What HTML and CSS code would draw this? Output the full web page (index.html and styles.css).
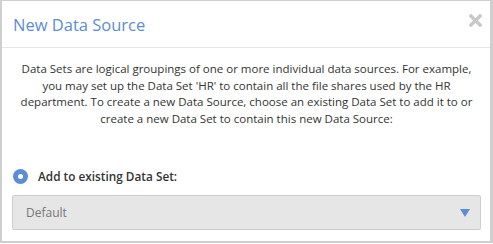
FILE: index.html
```html
<!DOCTYPE html>
<html>
<head>
	<title>New Data Source</title>
	<link rel="stylesheet" href="styles.css">
</head>
<body>
	<div class="modal">
		<div class="modal-header">
			<h2>New Data Source</h2>
			<svg class="modal-close" width="13" height="13" viewBox="0 0 13 13">
				<path d="M2 2 L11 11 M11 2 L2 11" stroke="#c8c8c8" stroke-width="3.4" stroke-linecap="square"/>
			</svg>
		</div>
		<div class="modal-body">
			<p class="intro">Data Sets are logical groupings of one or more individual data sources. For example, you may set up the Data Set 'HR' to contain all the file shares used by the HR department. To create a new Data Source, choose an existing Data Set to add it to or create a new Data Set to contain this new Data Source:</p>
			<label class="radio-row">
				<span class="radio"></span>
				<span class="radio-label">Add to existing Data Set:</span>
			</label>
			<div class="select">
				<span>Default</span>
				<span class="select-arrow"></span>
			</div>
		</div>
	</div>
</body>
</html>
```

FILE: styles.css
```css
html, body {
	margin: 0;
	padding: 0;
	background: #fff;
}
body {
	font-family: "Open Sans", "Liberation Sans", sans-serif;
	color: #333;
}
.modal {
	width: 488px;
	height: 240px;
	border: 2px solid #cfcfcf;
	border-top-width: 1px;
	border-right-width: 3px;
	background: #fff;
}
.modal-header {
	display: flex;
	align-items: center;
	justify-content: space-between;
	height: 46px;
	padding: 0 8px 0 11px;
	border-bottom: 1px solid #e6e6e6;
}
.modal-header h2 {
	margin: 0;
	font-size: 16.5px;
	font-weight: 400;
	color: #5b8dd4;
	padding-top: 1px;
}
.modal-close {
	margin-top: -8px;
}
.modal-body {
	padding: 13px 9px 0 10px;
}
.intro {
	margin: 0 0 40px;
	padding: 0 8px;
	font-size: 11.5px;
	line-height: 16.5px;
	text-align: center;
	color: #333;
}
.radio-row {
	display: flex;
	align-items: center;
	gap: 10px;
	height: 18px;
	padding-left: 1px;
	margin-bottom: 10px;
}
.radio {
	width: 15px;
	height: 15px;
	border-radius: 50%;
	background: #5b8dd4;
	position: relative;
}
.radio::after {
	content: "";
	position: absolute;
	left: 5px;
	top: 5px;
	width: 5px;
	height: 5px;
	border-radius: 50%;
	background: #fff;
}
.radio-label {
	font-size: 11.8px;
	font-weight: 600;
	color: #333;
}
.select {
	display: flex;
	align-items: center;
	justify-content: space-between;
	height: 33px;
	padding: 0 10px 0 13px;
	background: #e6e6e6;
	border: 1px solid #cdcdcd;
	border-radius: 2px;
	font-size: 12px;
	color: #777;
}
.select-arrow {
	width: 0;
	height: 0;
	border-left: 5px solid transparent;
	border-right: 5px solid transparent;
	border-top: 8px solid #5b8dd4;
}
```
